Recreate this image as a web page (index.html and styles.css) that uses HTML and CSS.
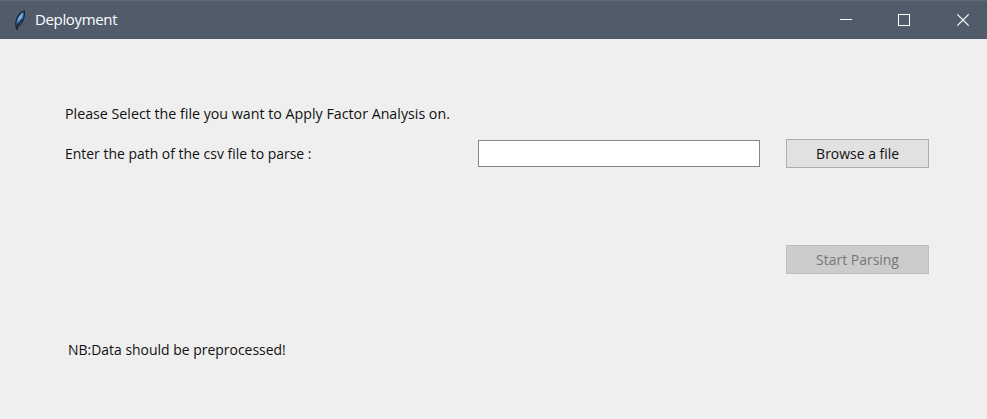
FILE: index.html
```html
<!DOCTYPE html>
<html lang="en">
<head>
<meta charset="utf-8">
<title>Deployment</title>
<link rel="stylesheet" href="styles.css">
</head>
<body>
<div class="window">
  <header class="titlebar">
    <svg class="feather" width="16" height="24" viewBox="0 0 16 24">
      <path d="M12.4 3.2C8.5 3.8 4.5 8.5 3.8 14.5L4 18.5l.8 2L6 18.3C10 16.5 13 10 12.4 3.2Z" fill="#3c6ea8" stroke="#17202c" stroke-width="1.2"/>
      <path d="M11.3 4.5C8.5 6.5 6 10 5.3 14.2L9.5 10.6Z" fill="#78b3ec"/>
      <path d="M10 11C8.5 14 7 15.5 5.3 17v4.5" fill="none" stroke="#17202c" stroke-width="1.2"/>
    </svg>
    <span class="title">Deployment</span>
    <div class="controls">
      <svg width="58" height="39" viewBox="0 0 58 39"><path d="M20 19.5h12" stroke="#fff"/></svg>
      <svg width="58" height="39" viewBox="0 0 58 39"><rect x="20.5" y="14.5" width="11" height="11" fill="none" stroke="#fff"/></svg>
      <svg width="51" height="39" viewBox="0 0 51 39"><path d="m21.3 14.3 11.4 11.4m0-11.4L21.3 25.7" stroke="#fff" stroke-width="1.2"/></svg>
    </div>
  </header>
  <main class="form">
    <p class="label heading">Please Select the file you want to Apply Factor Analysis on.</p>
    <div class="row">
      <label class="label path" for="path">Enter the path of the csv file to parse :</label>
      <input class="entry" id="path" type="text">
      <button class="button browse"><span>Browse a file</span></button>
    </div>
    <button class="button start" disabled><span>Start Parsing</span></button>
    <p class="label note">NB:Data should be preprocessed!</p>
  </main>
</div>
</body>
</html>
```
FILE: styles.css
```css
* { box-sizing: border-box; }
body { margin: 0; background: #efefef; color: #111; font: 15px/20px "Open Sans", "Noto Sans", sans-serif; }
.window { height: 419px; display: flex; flex-direction: column; overflow: hidden; }
.titlebar { height: 39px; flex: none; display: flex; align-items: center; padding-left: 12px; background: #515c6b; border-top: 1px solid #5f6a79; color: #fff; }
.feather { margin: -1px 7px 0 0; }
.title { margin-top: -2px; letter-spacing: -0.35px; }
.controls { margin: -1px 0 0 auto; display: flex; height: 39px; }
.form { flex: 1; display: flex; flex-direction: column; padding: 64px 58px 0 65px; }
.label { margin: 0; white-space: nowrap; transform: scaleX(.93); transform-origin: left; }
.heading { transform: scaleX(.949); }
.row { display: flex; align-items: center; margin-top: 16px; height: 29px; }
.path { width: 413px; margin-top: -2px; }
.entry { width: 283px; height: 27px; margin: 0 26px 0 0; padding: 0 4px; border: 1px solid #858585; background: #fff; font: inherit; }
.button { width: 143px; height: 29px; padding: 0 0 2px; border: 1px solid #adadad; background: #e1e1e1; color: #111; font: inherit; }
.button span { display: inline-block; transform: scaleX(.93); }
.start { align-self: flex-end; margin-top: 77px; background: #ccc; border-color: #bfbfbf; color: #777; }
.note { margin: 65px 0 0 3px; }
```
